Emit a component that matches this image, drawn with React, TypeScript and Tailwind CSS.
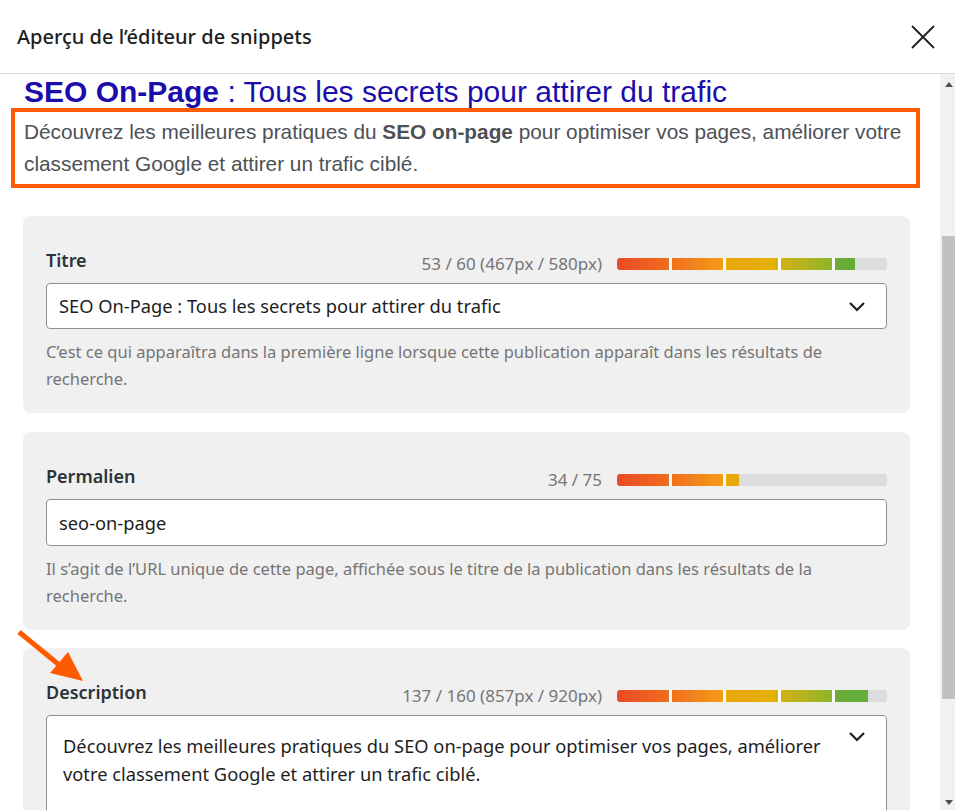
import type { ReactNode } from 'react';

const segments = [
  'bg-linear-to-r from-[#e84a26] to-[#f26d1d]',
  'bg-linear-to-r from-[#f0701f] to-[#f39b15]',
  'bg-linear-to-r from-[#eaa70a] to-[#e5b100]',
  'bg-linear-to-r from-[#d4b10c] to-[#88b42b]',
  'bg-linear-to-r from-[#69ad36] to-[#5ead3b]',
];

const Meter = ({ fill }: { fill: number }) => (
  <div className="h-3 w-[270px] rounded-[3px] bg-[#dcdcde] overflow-hidden">
    <div className="h-full overflow-hidden" style={{ width: `${fill * 100}%` }}>
      <div className="flex h-full w-[270px] gap-[3px] bg-white">
        {segments.map((s) => (
          <div key={s} className={`h-full flex-1 ${s}`} />
        ))}
      </div>
    </div>
  </div>
);

const Chevron = () => (
  <svg width="24" height="24" viewBox="0 0 24 24" fill="none" className="shrink-0">
    <path d="M5 9l7 7 7-7" stroke="#1e1e1e" strokeWidth="2.2" />
  </svg>
);

const Card = ({
  label,
  counter,
  fill,
  children,
  help,
  className,
}: {
  label: string;
  counter: string;
  fill: number;
  children: ReactNode;
  help?: string;
  className?: string;
}) => (
  <div className={`rounded-lg bg-[#f0f0f1] px-[23px] pt-[32px] pb-[21px] ${className ?? ''}`}>
    <div className="flex h-6 items-center justify-between">
      <span className="text-[18px] leading-6 font-semibold text-[#2c3338]">{label}</span>
      <div className="mt-[8px] flex items-center gap-[15px]">
        <span className="text-[17px] leading-[24px] text-[#757575]">{counter}</span>
        <Meter fill={fill} />
      </div>
    </div>
    <div className="mt-[11px]">{children}</div>
    {help && (
      <p className="mt-[9px] text-[16.5px] leading-[27px] text-[#757575]">{help}</p>
    )}
  </div>
);

export default function App() {
  return (
    <div className="relative flex h-[810px] w-[955px] flex-col overflow-hidden bg-white font-['Noto_Sans',sans-serif]">
      <div className="flex h-[74px] shrink-0 items-center justify-between border-b border-[#dcdcde] pl-[17px] pr-[18px]">
        <h1 className="text-[20px] font-medium text-[#1e1e1e]">
          Aperçu de l’éditeur de snippets
        </h1>
        <svg width="28" height="28" viewBox="0 0 28 28" fill="none">
          <path d="M3 3l22 22M25 3L3 25" stroke="#1e1e1e" strokeWidth="1.8" />
        </svg>
      </div>

      <div className="flex min-h-0 flex-1">
        <div className="flex-1 pt-[2px]">
          <div className="pl-[24px] font-['Liberation_Sans',Arial,sans-serif] text-[30px] leading-[32px] text-[#1a0dab]">
            <span className="font-bold">SEO On-Page</span> : Tous les secrets pour attirer du trafic
          </div>
          <div className="ml-[11px] mr-[20px] border-4 border-[#ff5a00] py-1 pl-[9px] font-['Liberation_Sans',Arial,sans-serif] text-[20.8px] leading-[32px] text-[#4d5156]">
            Découvrez les meilleures pratiques du <b>SEO on-page</b> pour optimiser vos pages, améliorer votre classement Google et attirer un trafic ciblé.
          </div>

          <div className="ml-[23px] mr-[30px] mt-[28px] flex flex-col">
            <Card
              label="Titre"
              counter="53 / 60 (467px / 580px)"
              fill={0.88}
              help="C’est ce qui apparaîtra dans la première ligne lorsque cette publication apparaît dans les résultats de recherche."
            >
              <div className="flex h-[46px] items-center justify-between rounded border border-[#8c8f94] bg-white pl-[12px] pr-[17px] text-[18.3px] text-[#1e1e1e]">
                <span>SEO On-Page : Tous les secrets pour attirer du trafic</span>
                <Chevron />
              </div>
            </Card>

            <Card
              className="mt-[19px]"
              label="Permalien"
              counter="34 / 75"
              fill={0.45}
              help="Il s’agit de l’URL unique de cette page, affichée sous le titre de la publication dans les résultats de la recherche."
            >
              <div className="flex h-[47px] items-center rounded border border-[#8c8f94] bg-white pl-[12px] text-[18.3px] text-[#1e1e1e]">
                seo-on-page
              </div>
            </Card>

            <Card
              className="mt-[18px]"
              label="Description"
              counter="137 / 160 (857px / 920px)"
              fill={0.93}
            >
              <div className="flex h-[120px] items-start justify-between rounded border border-[#8c8f94] bg-white pl-[16px] pr-[17px] pt-[16px] text-[18.3px] leading-[28px] text-[#1e1e1e]">
                <p className="pr-6">
                  Découvrez les meilleures pratiques du SEO on-page pour optimiser vos pages, améliorer votre classement Google et attirer un trafic ciblé.
                </p>
                <div className="-mt-[8px]">
                  <Chevron />
                </div>
              </div>
            </Card>
          </div>
        </div>

        <div className="flex w-[15px] shrink-0 flex-col bg-[#f1f1f1]">
          <div className="flex h-[20px] items-center justify-center pl-[2px]">
            <div className="h-0 w-0 border-x-[4px] border-b-[5px] border-x-transparent border-b-[#505050]" />
          </div>
          <div className="mt-[142px] ml-[2px] h-[463px] bg-[#c1c1c1]" />
          <div className="flex-1" />
          <div className="flex h-[16px] items-center justify-center pl-[2px]">
            <div className="h-0 w-0 border-x-[4px] border-t-[5px] border-x-transparent border-t-[#505050]" />
          </div>
        </div>
      </div>

      <svg
        className="absolute left-[14px] top-[626px]"
        width="76"
        height="64"
        viewBox="0 0 76 64"
        fill="none"
      >
        <path d="M5 6l44 36" stroke="#ff5a00" strokeWidth="5" />
        <path d="M54 26L36 47L69 55Z" fill="#ff5a00" />
      </svg>
    </div>
  );
}
